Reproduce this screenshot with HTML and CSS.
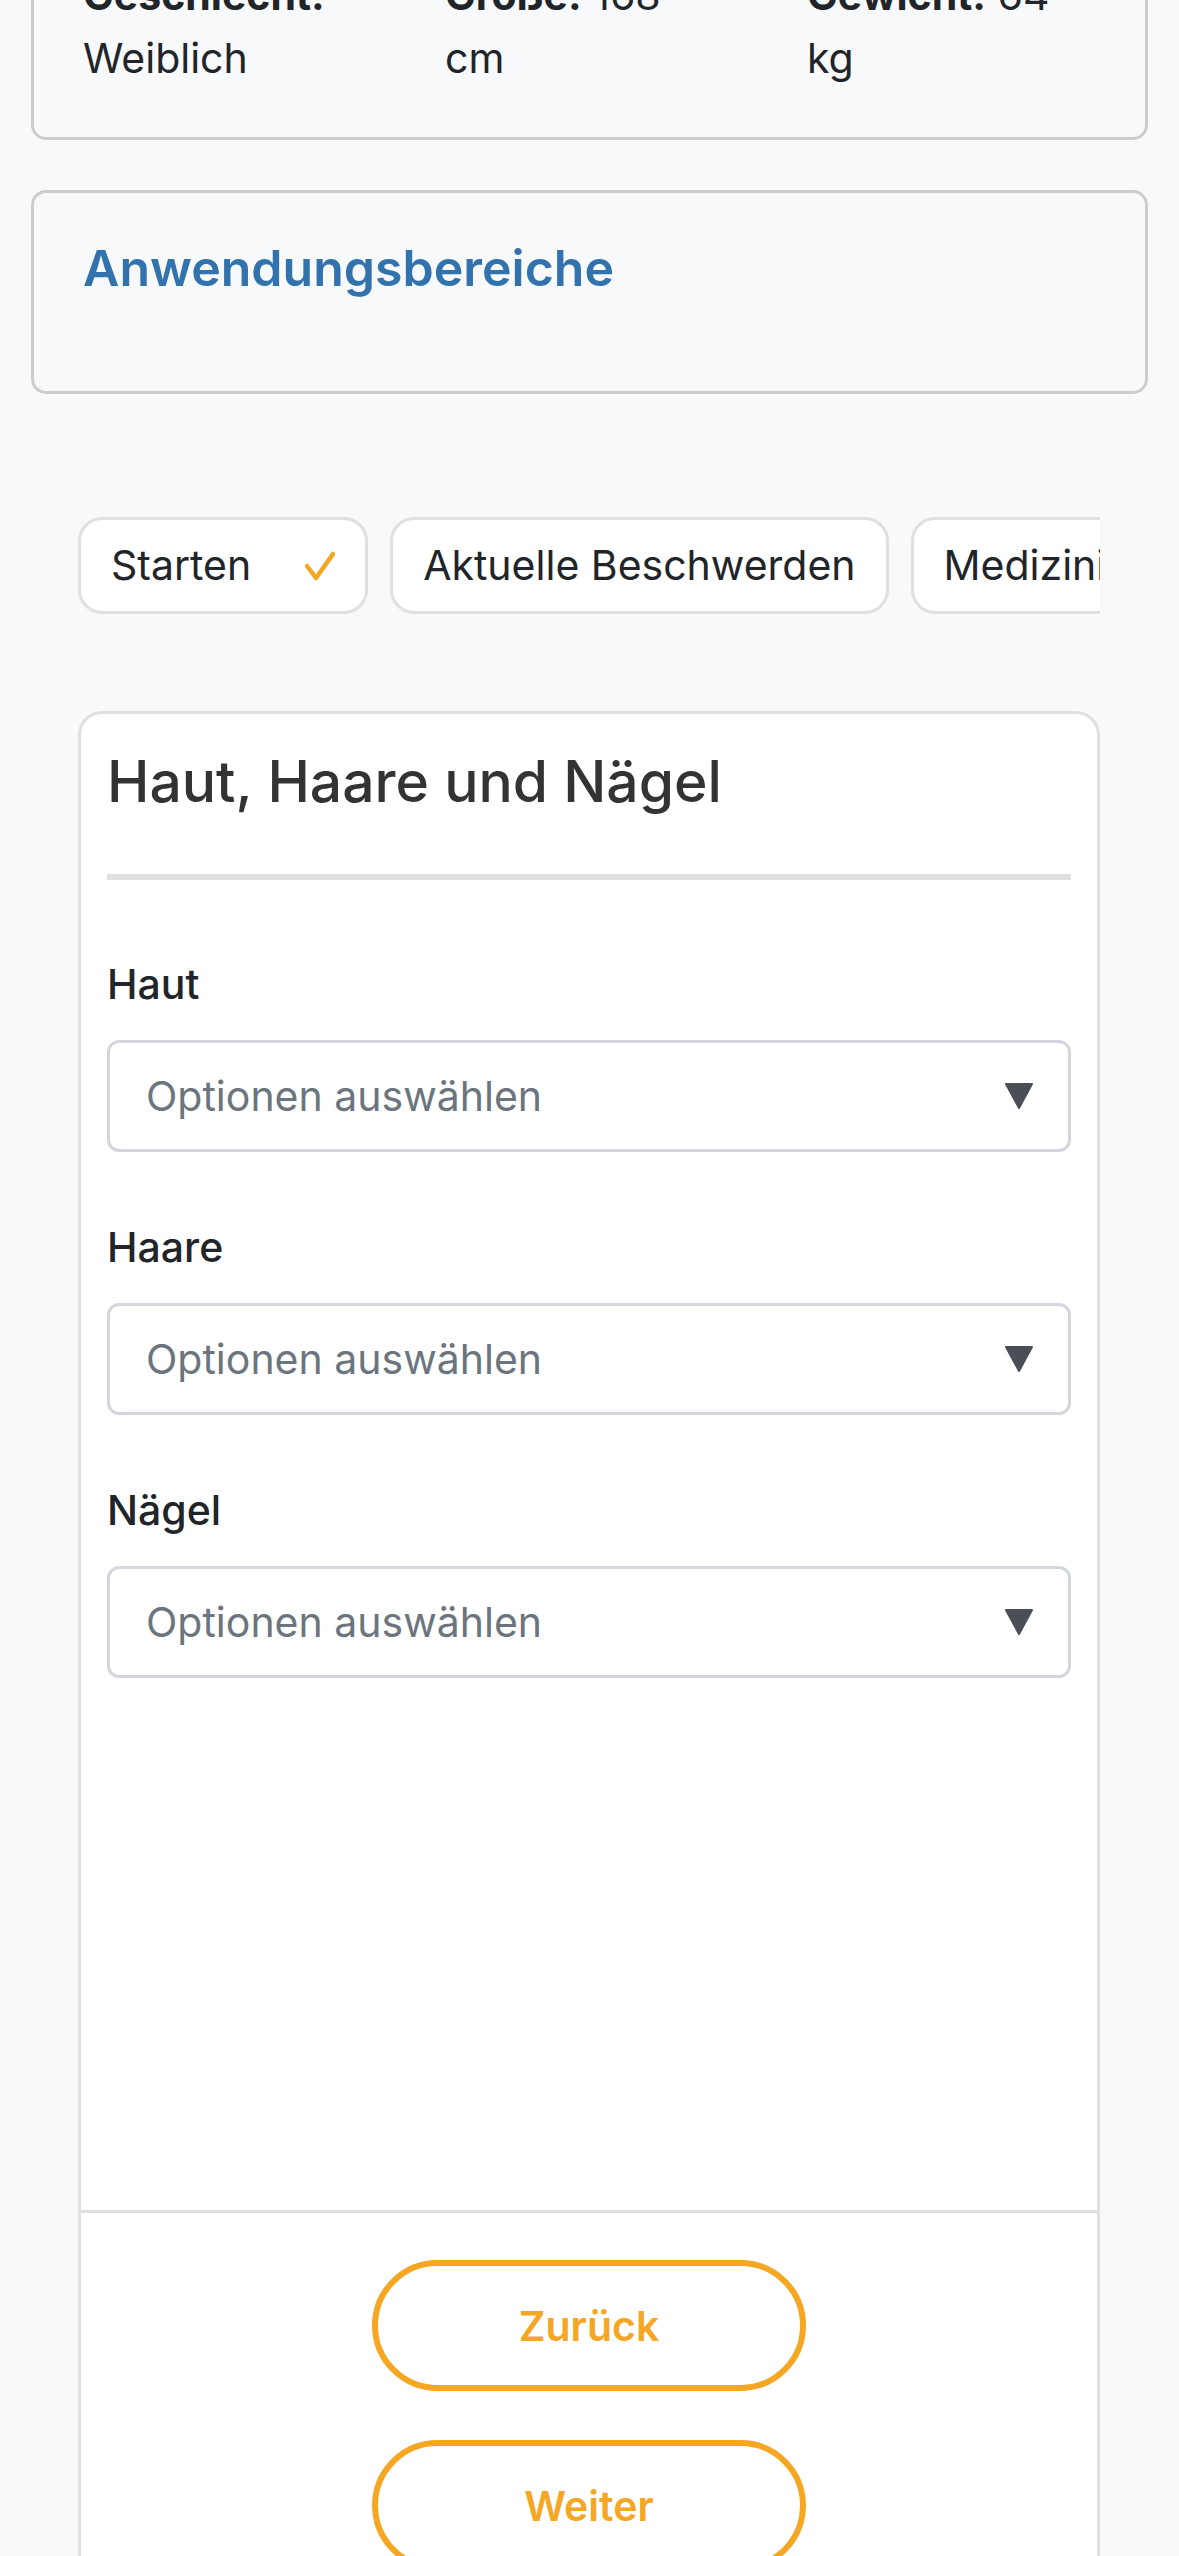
FILE: index.html
```html
<!DOCTYPE html>
<html lang="de">
<head>
    <meta charset="UTF-8">
    <meta name="viewport" content="width=device-width, initial-scale=1.0">
    <title>Fragebogen - Haut, Haare und Nägel</title>
    <link rel="stylesheet" href="styles.css">
</head>
<body>
    <div class="page">
        <!-- Patientendaten -->
        <section class="info-card">
            <div class="info-grid">
                <p><strong>Geschlecht:</strong> Weiblich</p>
                <p><strong>Größe:</strong> 168 cm</p>
                <p><strong>Gewicht:</strong> 64 kg</p>
            </div>
        </section>

        <section class="info-card areas">
            <h2>Anwendungsbereiche</h2>
        </section>

        <div class="wizard">
            <!-- Schritte -->
            <nav class="steps">
                <div class="step done">
                    Starten
                    <svg class="check" viewBox="0 0 30 30" width="30" height="30">
                        <polyline points="2,15 11,27 28,3" fill="none" stroke="#f5a623" stroke-width="4.5" stroke-linecap="round" stroke-linejoin="round"/>
                    </svg>
                </div>
                <div class="step">Aktuelle Beschwerden</div>
                <div class="step">Medizinische Vorgeschichte</div>
                <div class="step">Lebensstil</div>
            </nav>

            <div class="form-card">
                <div class="form-body">
                    <h3>Haut, Haare und Nägel</h3>
                    <hr>
                    <div class="fields">
                        <div class="field">
                            <label>Haut</label>
                            <div class="select">
                                <span>Optionen auswählen</span>
                                <svg class="arrow" viewBox="0 0 28 26" width="28" height="26"><polygon points="1,1 27,1 14,25" fill="#4a4f57" stroke="#4a4f57" stroke-width="2" stroke-linejoin="round"/></svg>
                            </div>
                        </div>
                        <div class="field">
                            <label>Haare</label>
                            <div class="select">
                                <span>Optionen auswählen</span>
                                <svg class="arrow" viewBox="0 0 28 26" width="28" height="26"><polygon points="1,1 27,1 14,25" fill="#4a4f57" stroke="#4a4f57" stroke-width="2" stroke-linejoin="round"/></svg>
                            </div>
                        </div>
                        <div class="field">
                            <label>Nägel</label>
                            <div class="select">
                                <span>Optionen auswählen</span>
                                <svg class="arrow" viewBox="0 0 28 26" width="28" height="26"><polygon points="1,1 27,1 14,25" fill="#4a4f57" stroke="#4a4f57" stroke-width="2" stroke-linejoin="round"/></svg>
                            </div>
                        </div>
                    </div>
                </div>
                <div class="form-footer">
                    <button class="btn-outline">Zurück</button>
                    <button class="btn-outline">Weiter</button>
                </div>
            </div>
        </div>
    </div>
</body>
</html>
```

FILE: styles.css
```css
body {
    margin: 0;
    background-color: #f8f9fa;
    color: #212529;
    font-family: Inter, "Liberation Sans", Arial, sans-serif;
    font-size: 41px;
    line-height: 63px;
}
/* la page est deja defilee : la premiere carte commence au-dessus */
.page {
    margin-top: -84px;
    padding: 0 31px 0 31px;
}
.info-card {
    background-color: #f8f9fa;
    border: 3px solid #cccccc;
    border-radius: 15px;
    padding: 45px 49px 47px;
}
.info-card + .info-card {
    margin-top: 50px;
}
.info-grid {
    display: grid;
    grid-template-columns: repeat(3, 270px);
    column-gap: 92px;
}
.info-grid p {
    margin: 0;
}
.info-grid strong {
    font-weight: 700;
}
.areas h2 {
    margin: 0 0 46px;
    font-size: 50px;
    line-height: 60px;
    font-weight: 600;
    color: #3373ad;
}
.wizard {
    margin: 123px 48px 0 47px;
}
.steps {
    display: flex;
    gap: 22px;
    overflow: hidden;
}
.step {
    flex-shrink: 0;
    display: flex;
    align-items: center;
    gap: 54px;
    height: 97px;
    box-sizing: border-box;
    padding: 0 30px;
    background-color: #fff;
    border: 3px solid #e0e0e0;
    border-radius: 24px;
    white-space: nowrap;
}
.check {
    display: block;
}
.form-card {
    margin-top: 97px;
    background-color: #fff;
    border: 3px solid #e0e0e0;
    border-radius: 24px;
}
.form-body {
    box-sizing: border-box;
    min-height: 1496px;
    padding: 32px 26px 0;
}
.form-body h3 {
    margin: 0;
    font-size: 57px;
    line-height: 71px;
    font-weight: 500;
    color: #333;
}
.form-body hr {
    height: 6px;
    margin: 57px 0 73px;
    border: none;
    background-color: #e0e0e0;
}
.fields {
    display: flex;
    flex-direction: column;
    gap: 64px;
}
.field label {
    display: block;
    margin-bottom: 24px;
    font-weight: 500;
}
.select {
    display: flex;
    align-items: center;
    justify-content: space-between;
    height: 112px;
    box-sizing: border-box;
    padding: 0 35px 0 36px;
    border: 3px solid #d3d7dd;
    border-radius: 12px;
    color: #6c757d;
}
.arrow {
    display: block;
}
.form-footer {
    display: flex;
    flex-direction: column;
    align-items: center;
    gap: 49px;
    padding: 47px 0 60px;
    border-top: 3px solid #e0e0e0;
}
.btn-outline {
    width: 434px;
    height: 131px;
    background-color: #fff;
    border: 6px solid #f5a623;
    border-radius: 999px;
    color: #f5a623;
    font-family: Inter, "Liberation Sans", Arial, sans-serif;
    font-size: 41px;
    font-weight: 600;
    cursor: pointer;
}
```
